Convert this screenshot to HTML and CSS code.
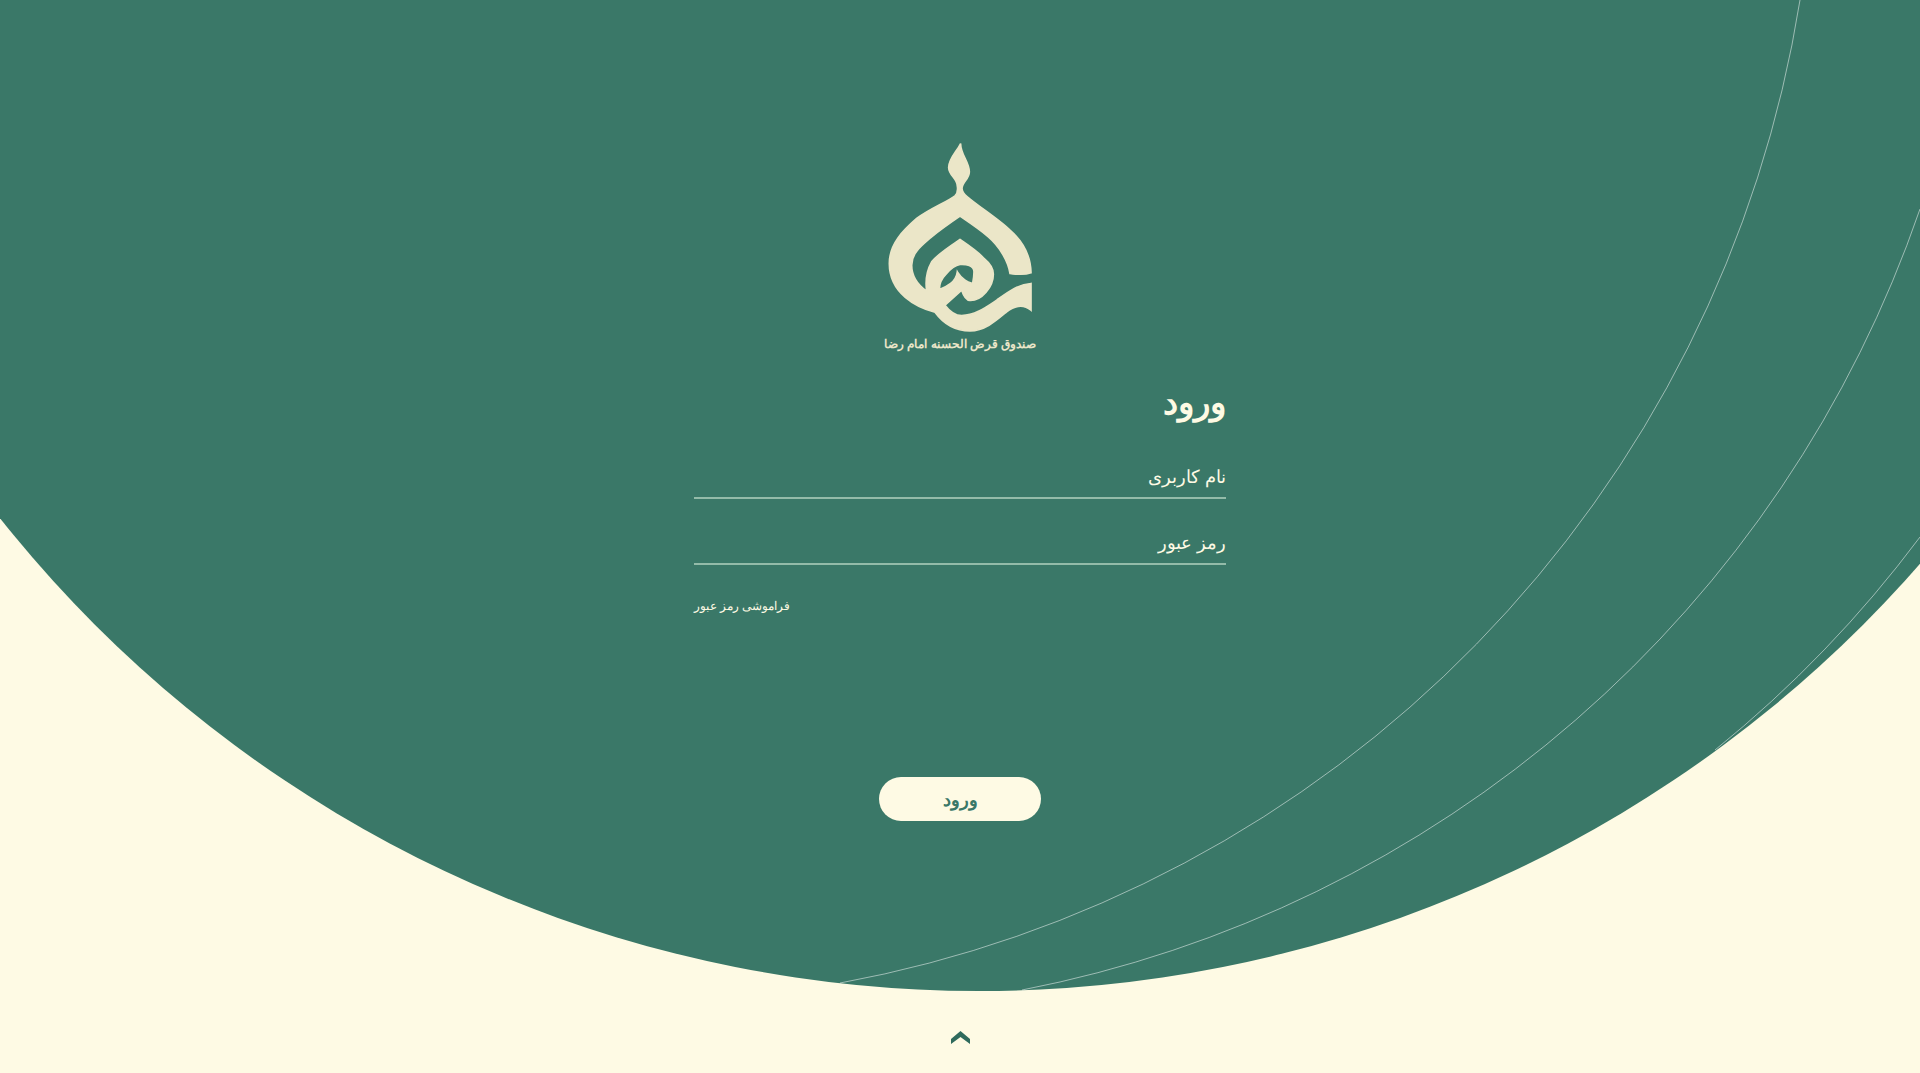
FILE: index.html
```html
<!DOCTYPE html>
<html lang="fa" dir="rtl">
<head>
  <meta charset="utf-8">
  <title>ورود</title>
  <link rel="stylesheet" href="styles.css">
</head>
<body>
  <svg class="backdrop" viewBox="0 0 1920 1073" aria-hidden="true">
    <circle class="backdrop-disc" cx="979" cy="-259" r="1250"/>
    <path class="backdrop-line" d="M840 983A1189 1189 0 0 0 1800 0"/>
    <path class="backdrop-line" d="M1022 990A1189 1189 0 0 0 1920 209"/>
    <path class="backdrop-line" d="M1715 750A1189 1189 0 0 0 1920 537"/>
  </svg>

  <main class="page">
    <div class="logo">
      <svg class="logo-mark" viewBox="0 0 600 620" aria-hidden="true">
        <path fill-rule="evenodd" d="M302 40C300 70 328 95 328 125C328 148 306 155 306 175C306 185 312 192 322 200C360 232 420 270 450 300C490 335 512 375 513 428C490 436 470 432 450 430C445 395 420 350 385 320C355 295 325 275 300 258C275 275 240 300 215 320C180 350 155 370 155 405C155 440 175 465 200 483C196 455 198 425 215 395C235 370 275 345 300 328C325 345 355 365 372 385C390 400 400 415 400 432C400 470 365 512 330 511C318 510 310 495 305 480L255 525C270 545 285 556 305 556C345 556 380 530 410 510C445 485 475 462 513 460V540C495 525 470 522 440 545C410 570 375 602 330 602C285 602 250 580 225 546C170 532 88 490 88 400C88 340 130 300 170 265C210 235 262 215 285 197C292 190 294 180 292 168C292 145 266 135 266 112C266 85 290 65 302 40ZM238 478C238 460 245 445 258 432C270 418 285 405 300 403C318 402 342 405 342 425C342 440 340 450 338 460C330 458 322 456 315 450C305 442 298 435 292 425C290 440 282 452 272 460C262 468 250 474 238 478Z"/>
      </svg>
      <div class="logo-name">صندوق قرض الحسنه امام رضا</div>
    </div>

    <form class="login-form">
      <h1>ورود</h1>
      <label class="field"><span>نام کاربری</span><input type="text"></label>
      <label class="field"><span>رمز عبور</span><input type="password"></label>
      <a class="forgot" href="#">فراموشی رمز عبور</a>
      <button type="button" class="submit">ورود</button>
    </form>

    <svg class="chevron" viewBox="0 0 19 13" aria-hidden="true">
      <path d="M0 8L9.5 0L19 8V13L9.5 6L0 13Z"/>
    </svg>
  </main>
</body>
</html>
```

FILE: styles.css
```css
* {
  margin: 0;
  padding: 0;
  box-sizing: border-box;
  font-family: 'Noto Sans', sans-serif;
}

body, html {
  height: 100%;
  overflow: hidden;
}

body {
  background: #fefae4;
  position: relative;
}

.backdrop {
  position: absolute;
  top: 0;
  left: 0;
  width: 100%;
  height: 100%;
}

.backdrop-disc {
  fill: #3a7868;
}

.backdrop-line {
  fill: none;
  stroke: rgba(255, 255, 255, 0.5);
  stroke-width: 1;
}

.page {
  position: relative;
  height: 100%;
  display: flex;
  flex-direction: column;
  align-items: center;
  padding-top: 130px;
}

.logo {
  display: flex;
  flex-direction: column;
  align-items: center;
}

.logo-mark {
  width: 200px;
  height: 207px;
  fill: #ebe6c8;
  stroke: #ebe6c8;
  stroke-width: 5;
}

.logo-name {
  color: #ebe6c8;
  font-size: 12px;
  font-weight: bold;
  line-height: 14px;
}

.login-form {
  width: 532px;
  margin-top: 28px;
  display: flex;
  flex-direction: column;
}

.login-form h1 {
  color: #fefae4;
  font-size: 34px;
  font-weight: bold;
  line-height: 44px;
}

.field {
  display: flex;
  align-items: center;
  height: 44px;
  border-bottom: 2px solid #93bba9;
  color: #fefae4;
  font-size: 18px;
}

.field:first-of-type {
  margin-top: 32px;
}

.field + .field {
  margin-top: 22px;
}

.field input {
  flex: 1;
  min-width: 0;
  background: none;
  border: none;
  outline: none;
}

.forgot {
  align-self: flex-end;
  color: #fefae4;
  font-size: 12px;
  line-height: 18px;
  margin-top: 32px;
  text-decoration: none;
}

.submit {
  align-self: center;
  width: 162px;
  height: 44px;
  margin-top: 162px;
  background: #fefae4;
  color: #3a7868;
  border: none;
  border-radius: 22px;
  font-size: 18px;
  font-weight: bold;
  cursor: pointer;
}

.chevron {
  width: 19px;
  height: 13px;
  fill: #2f6a5c;
  margin-top: 210px;
}
```
